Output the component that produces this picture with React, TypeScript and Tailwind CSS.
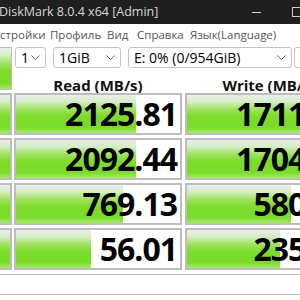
import React from "react";

const rows = [
  { read: "2125.81", write: "1711.69" },
  { read: "2092.44", write: "1704.51" },
  { read: "769.13", write: "580.37" },
  { read: "56.01", write: "235.45" },
];

const barWidth = (v: string) => Math.max(0, Math.round(25 + 28.5 * Math.log10(parseFloat(v))));

const green =
  "bg-[linear-gradient(to_bottom,#ededed_0%,#d4eec4_18%,#9fe25f_38%,#7edc2c_55%,#7adb28_85%,#a4ea68_100%)]";

function Chevron() {
  return (
    <svg width="9" height="5" viewBox="0 0 9 5" className="shrink-0">
      <path d="M0.5 0.5 L4.5 4.5 L8.5 0.5" fill="none" stroke="#6a6a6a" strokeWidth="1" />
    </svg>
  );
}

function Combo({ w, text }: { w: string; text: string }) {
  return (
    <div
      className={`${w} h-[21px] shrink-0 border border-[#c4c4c4] rounded-[3px] bg-white flex items-center pl-[5px] pr-[5px] text-[14px] leading-[19px] text-black`}
    >
      <span className="flex-1 whitespace-nowrap">{text}</span>
      <Chevron />
    </div>
  );
}

function Cell({ value }: { value: string }) {
  return (
    <div className="relative w-[168px] h-[42px] shrink-0 border-2 border-[#bdbdbd] bg-white overflow-hidden">
      <div className={`absolute left-0 top-0 bottom-0 ${green}`} style={{ width: barWidth(value) }} />
      <div className="relative h-full flex items-center justify-end pr-[3px] text-[32px] font-bold tracking-[-1px] text-black leading-[38px]">
        {value}
      </div>
    </div>
  );
}

export default function App() {
  return (
    <div className="w-[300px] h-[300px] overflow-hidden bg-white font-['Open_Sans','Noto_Sans',sans-serif]">
      <div className="w-[360px]">
        {/* title bar */}
        <div className="h-[24px] bg-[#1f1f1f] flex items-center">
          <div className="w-[253px] shrink-0 text-[12.5px] text-[#d6d6d6] whitespace-nowrap leading-[16px] -ml-[1px]">
            DiskMark 8.0.4 x64 [Admin]
          </div>
          <div className="w-[9px] h-[1px] bg-[#cfcfcf] shrink-0 mt-[1px]" />
          <div className="ml-[31px] w-[10px] h-[10px] border border-[#cfcfcf] shrink-0" />
        </div>
        {/* menu bar */}
        <div className="h-[21px] flex items-center text-[11.5px] text-[#555] whitespace-nowrap leading-[16px]">
          <span className="w-[50px] shrink-0">стройки</span>
          <span className="w-[57px] shrink-0">Профиль</span>
          <span className="w-[30px] shrink-0">Вид</span>
          <span className="w-[53px] shrink-0">Справка</span>
          <span className="shrink-0">Язык(Language)</span>
        </div>
        {/* main */}
        <div className="mt-[2px] flex flex-col">
          <div className="flex h-[46px]">
            <div className={`w-[12px] h-[43px] shrink-0 border border-[#bdbdbd] border-l-0 ${green}`} />
            <div className="ml-[3px] flex flex-col">
              <div className="flex h-[21px]">
                <Combo w="w-[31px]" text="1" />
                <div className="ml-[7px]">
                  <Combo w="w-[68px]" text="1GiB" />
                </div>
                <div className="ml-[7px]">
                  <Combo w="w-[164px]" text="E: 0% (0/954GiB)" />
                </div>
                <div className="ml-[2px]">
                  <Combo w="w-[60px]" text="MB/s" />
                </div>
              </div>
              <div className="flex h-[25px] items-end -ml-[1px]">
                <div className="w-[168px] text-center text-[15px] font-bold text-[#111] leading-[16px] whitespace-nowrap">
                  Read (MB/s)
                </div>
                <div className="ml-[3px] w-[168px] text-center text-[15px] font-bold text-[#111] leading-[16px] whitespace-nowrap">
                  Write (MB/s)
                </div>
              </div>
            </div>
          </div>
          <div className="flex flex-col gap-[3px]">
            {rows.map((r, i) => (
              <div key={i} className="flex h-[42px]">
                <div className={`w-[12px] h-[42px] shrink-0 border-2 border-[#bdbdbd] border-l-0 ${green}`} />
                <div className="ml-[2px]">
                  <Cell value={r.read} />
                </div>
                <div className="ml-[3px]">
                  <Cell value={r.write} />
                </div>
              </div>
            ))}
          </div>
          <div className="mt-[4px] h-[21px] border-y border-[#bdbdbd] bg-white" />
        </div>
      </div>
    </div>
  );
}
